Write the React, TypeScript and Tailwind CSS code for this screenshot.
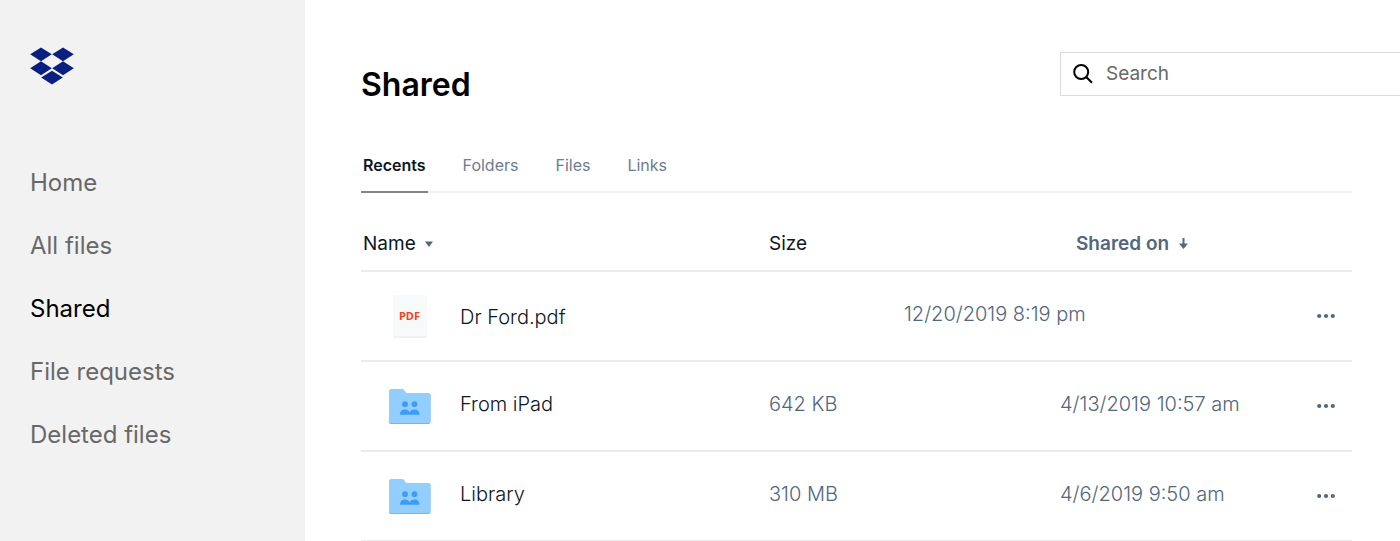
import React from "react";

const navItems = ["Home", "All files", "Shared", "File requests", "Deleted files"];
const tabs = ["Recents", "Folders", "Files", "Links"];

type FileRow = {
  name: string;
  kind: "pdf" | "folder";
  size?: string;
  sharedOn: string;
};

const files: FileRow[] = [
  { name: "Dr Ford.pdf", kind: "pdf", sharedOn: "12/20/2019 8:19 pm" },
  { name: "From iPad", kind: "folder", size: "642 KB", sharedOn: "4/13/2019 10:57 am" },
  { name: "Library", kind: "folder", size: "310 MB", sharedOn: "4/6/2019 9:50 am" },
];

function Logo() {
  return (
    <svg width="44" height="38" viewBox="0 0 44 38" fill="#0a1f82" aria-hidden="true">
      <path d="M11 0.500 21.800 7.300 11 14.300 0.200 7.300Z" />
      <path d="M33 0.500 43.800 7.300 33 14.300 22.200 7.300Z" />
      <path d="M11 14.300 21.800 21.300 11 28.200 0.200 21.300Z" />
      <path d="M33 14.300 43.800 21.300 33 28.200 22.200 21.300Z" />
      <path d="M22 23.800 32.800 30.600 22 37.500 11.200 30.600Z" />
    </svg>
  );
}

function FolderIcon() {
  return (
    <svg width="42" height="35" viewBox="0 0 42 35" aria-hidden="true">
      <path
        d="M2 1h11.500c.7 0 1.200.3 1.600.9L17 4.600h22.500c1.200 0 2 .8 2 2V33c0 1.200-.8 2-2 2H2c-1.200 0-2-.8-2-2V3c0-1.200.8-2 2-2Z"
        fill="#6cb8f7"
      />
      <path
        d="M2 0h11.500c.7 0 1.200.3 1.600.9L17 4h22.500c1.200 0 2 .8 2 2V32c0 1.200-.8 2-2 2H2c-1.200 0-2-.8-2-2V2c0-1.200.8-2 2-2Z"
        fill="#92ceff"
      />
      <circle cx="16" cy="15.200" r="2.900" fill="#3d9cf4" />
      <circle cx="25.500" cy="15.200" r="2.900" fill="#3d9cf4" />
      <path
        d="M11 25.800c0-3.200 2-5.200 5-5.200 2.200 0 4 1 4.750 2.800C21.500 21.600 23.300 20.600 25.500 20.600c3 0 5 2 5 5.200Z"
        fill="#3d9cf4"
      />
    </svg>
  );
}

function PdfIcon() {
  return (
    <span className="flex h-[43px] w-[34px] items-center justify-center rounded-xs border-b-2 border-[#eff1f3] bg-[#f7f9fa] pt-0.5 font-['Noto_Sans',sans-serif] text-[11px] font-bold text-[#f8401c]">
      PDF
    </span>
  );
}

function SearchIcon() {
  return (
    <svg width="20" height="20" viewBox="0 0 20 20" fill="none" stroke="#000" strokeWidth="2" aria-hidden="true">
      <circle cx="8.200" cy="8" r="7" />
      <path d="M13.200 13 19 18.800" />
    </svg>
  );
}

export default function App() {
  return (
    <div className="flex min-h-screen bg-white font-['Inter',sans-serif]">
      <aside className="w-[305px] shrink-0 bg-[#f2f2f2] px-[30px] pt-[47px]">
        <a href="#home" aria-label="Dropbox" className="block">
          <Logo />
        </a>
        <nav className="mt-[82px] flex flex-col gap-[31px]">
          {navItems.map((item) => (
            <a
              key={item}
              href="#"
              className={
                item === "Shared"
                  ? "text-[24px] leading-8 text-black"
                  : "text-[24px] leading-8 text-[#686868]"
              }
            >
              {item}
            </a>
          ))}
        </nav>
      </aside>

      <main className="min-w-0 flex-1">
        <header className="flex items-start justify-between pl-14 pt-[52px]">
          <h1 className="pt-3 text-[32px] leading-[42px] font-semibold text-black">Shared</h1>
          <label className="flex h-11 w-[340px] items-center gap-[13px] border border-r-0 border-[#d9dadb] pl-3">
            <SearchIcon />
            <input
              type="search"
              placeholder="Search"
              aria-label="Search"
              className="min-w-0 flex-1 text-[19px] outline-none placeholder:text-[#686868]"
            />
          </label>
        </header>

        <div className="mr-12 ml-14">
          <div role="tablist" className="mt-[47px] flex gap-[33px] border-b-2 border-[#f1f1f2]">
            {tabs.map((tab) => (
              <button
                key={tab}
                type="button"
                role="tab"
                aria-selected={tab === "Recents"}
                className={
                  tab === "Recents"
                    ? "-mb-0.5 border-b-2 border-[#858585] px-0.5 pb-3.5 text-[16px] leading-6 font-semibold text-[#0d1624]"
                    : "px-0.5 pb-3.5 text-[16px] leading-6 text-[#6d7c90]"
                }
              >
                {tab}
              </button>
            ))}
          </div>

          <table className="w-full table-fixed border-collapse text-left text-[20px] font-light">
            <colgroup>
              <col />
              <col className="w-[291px]" />
              <col className="w-[226px]" />
              <col className="w-[66px]" />
            </colgroup>
            <thead>
              <tr className="h-[78px] border-b-2 border-[#ebebeb] text-[19px] leading-7">
                <th className="pt-9 pb-3 pl-0.5 font-normal text-[#0d1624]">
                  <button type="button" className="flex items-center gap-[9px]">
                    Name
                    <svg width="8" height="6" viewBox="0 0 8 6" fill="#52667d" aria-hidden="true">
                      <path d="M0 0.500h8L4 6Z" />
                    </svg>
                  </button>
                </th>
                <th className="pt-9 pb-3 font-normal text-[#0d1624]">Size</th>
                <th className="pt-9 pb-3 pl-4 font-semibold text-[#52667d]">
                  <button type="button" className="flex items-center gap-2.5">
                    Shared on
                    <svg width="9" height="11" viewBox="0 0 9 11" fill="#52667d" aria-hidden="true">
                      <path d="M3.500 0h2v5.500H9L4.500 11 0 5.500h3.500Z" />
                    </svg>
                  </button>
                </th>
                <th />
              </tr>
            </thead>
            <tbody>
              {files.map((file) => (
                <tr key={file.name} className="h-[90px] border-b-2 border-[#ebebeb] text-[#52667d]">
                  <td>
                    <a href="#" className="flex items-center text-[#0d1624]">
                      <span className="flex w-[99px] justify-center pr-0.5">
                        {file.kind === "pdf" ? <PdfIcon /> : <FolderIcon />}
                      </span>
                      <span className={file.kind === "pdf" ? "pt-0.5" : "pb-1"}>{file.name}</span>
                    </a>
                  </td>
                  {file.size && <td className="pb-1">{file.size}</td>}
                  <td colSpan={file.size ? 1 : 2} className={file.size ? "pb-1" : "pb-1 pl-[135px]"}>
                    {file.sharedOn}
                  </td>
                  <td>
                    <button type="button" aria-label={`More options for ${file.name}`} className="ml-[31px] block">
                      <svg width="18" height="6" viewBox="0 0 18 6" fill="#52667d" aria-hidden="true">
                        <circle cx="2.200" cy="3" r="2.100" />
                        <circle cx="9" cy="3" r="2.100" />
                        <circle cx="15.800" cy="3" r="2.100" />
                      </svg>
                    </button>
                  </td>
                </tr>
              ))}
            </tbody>
          </table>
        </div>
      </main>
    </div>
  );
}
